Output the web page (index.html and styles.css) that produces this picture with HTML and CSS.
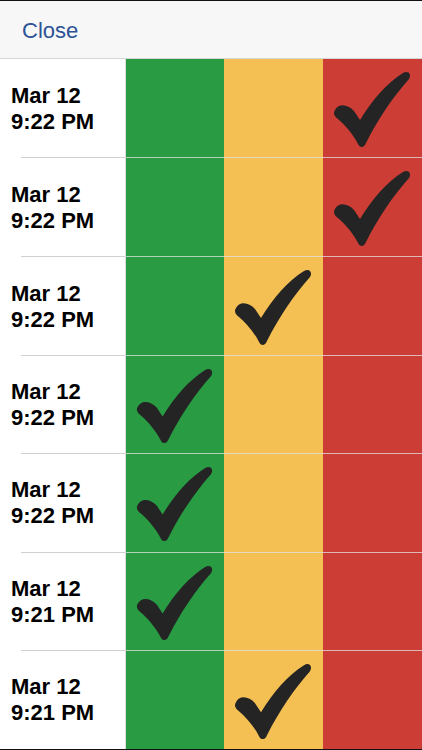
FILE: index.html
```html
<!DOCTYPE html>
<html>
<head>
<meta charset="utf-8">
<link rel="stylesheet" href="styles.css">
</head>
<body>
<div class="screen">
  <header class="bar"><span class="close">Close</span></header>
  <main class="list">
    <div class="row"><div class="when"><span>Mar 12</span><span>9:22 PM</span></div><div class="c green"></div><div class="c yellow"></div><div class="c red"><svg class="tick" viewBox="0 0 99 98"><path d="M12 51 C15 44 25 45 31 52 L37 61 C49 41 64 24 80 14 C85 11 89 15 86 20 C70 38 55 60 43 84 C41 89 37 89 35 85 C30 75 22 66 15 60 C11 57 10 54 12 51 Z"/></svg></div></div>
    <div class="row"><div class="when"><span>Mar 12</span><span>9:22 PM</span></div><div class="c green"></div><div class="c yellow"></div><div class="c red"><svg class="tick" viewBox="0 0 99 98"><path d="M12 51 C15 44 25 45 31 52 L37 61 C49 41 64 24 80 14 C85 11 89 15 86 20 C70 38 55 60 43 84 C41 89 37 89 35 85 C30 75 22 66 15 60 C11 57 10 54 12 51 Z"/></svg></div></div>
    <div class="row"><div class="when"><span>Mar 12</span><span>9:22 PM</span></div><div class="c green"></div><div class="c yellow"><svg class="tick" viewBox="0 0 99 98"><path d="M12 51 C15 44 25 45 31 52 L37 61 C49 41 64 24 80 14 C85 11 89 15 86 20 C70 38 55 60 43 84 C41 89 37 89 35 85 C30 75 22 66 15 60 C11 57 10 54 12 51 Z"/></svg></div><div class="c red"></div></div>
    <div class="row"><div class="when"><span>Mar 12</span><span>9:22 PM</span></div><div class="c green"><svg class="tick" viewBox="0 0 99 98"><path d="M12 51 C15 44 25 45 31 52 L37 61 C49 41 64 24 80 14 C85 11 89 15 86 20 C70 38 55 60 43 84 C41 89 37 89 35 85 C30 75 22 66 15 60 C11 57 10 54 12 51 Z"/></svg></div><div class="c yellow"></div><div class="c red"></div></div>
    <div class="row"><div class="when"><span>Mar 12</span><span>9:22 PM</span></div><div class="c green"><svg class="tick" viewBox="0 0 99 98"><path d="M12 51 C15 44 25 45 31 52 L37 61 C49 41 64 24 80 14 C85 11 89 15 86 20 C70 38 55 60 43 84 C41 89 37 89 35 85 C30 75 22 66 15 60 C11 57 10 54 12 51 Z"/></svg></div><div class="c yellow"></div><div class="c red"></div></div>
    <div class="row"><div class="when"><span>Mar 12</span><span>9:21 PM</span></div><div class="c green"><svg class="tick" viewBox="0 0 99 98"><path d="M12 51 C15 44 25 45 31 52 L37 61 C49 41 64 24 80 14 C85 11 89 15 86 20 C70 38 55 60 43 84 C41 89 37 89 35 85 C30 75 22 66 15 60 C11 57 10 54 12 51 Z"/></svg></div><div class="c yellow"></div><div class="c red"></div></div>
    <div class="row last"><div class="when"><span>Mar 12</span><span>9:21 PM</span></div><div class="c green"></div><div class="c yellow"><svg class="tick" viewBox="0 0 99 98"><path d="M12 51 C15 44 25 45 31 52 L37 61 C49 41 64 24 80 14 C85 11 89 15 86 20 C70 38 55 60 43 84 C41 89 37 89 35 85 C30 75 22 66 15 60 C11 57 10 54 12 51 Z"/></svg></div><div class="c red"></div></div>
  </main>
</div>
</body>
</html>
```
FILE: styles.css
```css
* { box-sizing: border-box; }
html, body { margin: 0; padding: 0; }
body {
  width: 422px;
  height: 750px;
  overflow: hidden;
  background: #fff;
  font-family: "Liberation Sans", Arial, sans-serif;
}
.screen {
  display: flex;
  flex-direction: column;
  height: 750px;
  border-top: 1px solid #111;
  border-bottom: 1px solid #111;
}
.bar {
  height: 58px;
  flex: none;
  background: #f7f7f7;
  border-bottom: 1px solid #d6d6d6;
  display: flex;
  align-items: center;
  padding-left: 22px;
}
.close {
  font-size: 22px;
  color: #2d5296;
  position: relative;
  top: 1px;
}
.list {
  flex: 1;
  display: flex;
  flex-direction: column;
}
.row {
  flex: 1;
  display: grid;
  grid-template-columns: 125px repeat(3, 1fr);
}
.when {
  display: flex;
  flex-direction: column;
  justify-content: center;
  padding-left: 11px;
  font-weight: bold;
  font-size: 22px;
  line-height: 26px;
  color: #000;
  background: linear-gradient(#cfcfcf, #cfcfcf) no-repeat 21px 100% / calc(100% - 21px) 1px;
}
.c {
  border-bottom: 1px solid rgba(225, 225, 225, 0.75);
  overflow: hidden;
}
.last .c { border-bottom: none; }
.last .when { background: none; }
.green { background: #289b43; border-left: 1px solid #dcdcdc; }
.yellow { background: #f4bf53; }
.red { background: #cc3d36; }
.tick {
  display: block;
  width: 100%;
  height: 100%;
  fill: #242424;
}
```
